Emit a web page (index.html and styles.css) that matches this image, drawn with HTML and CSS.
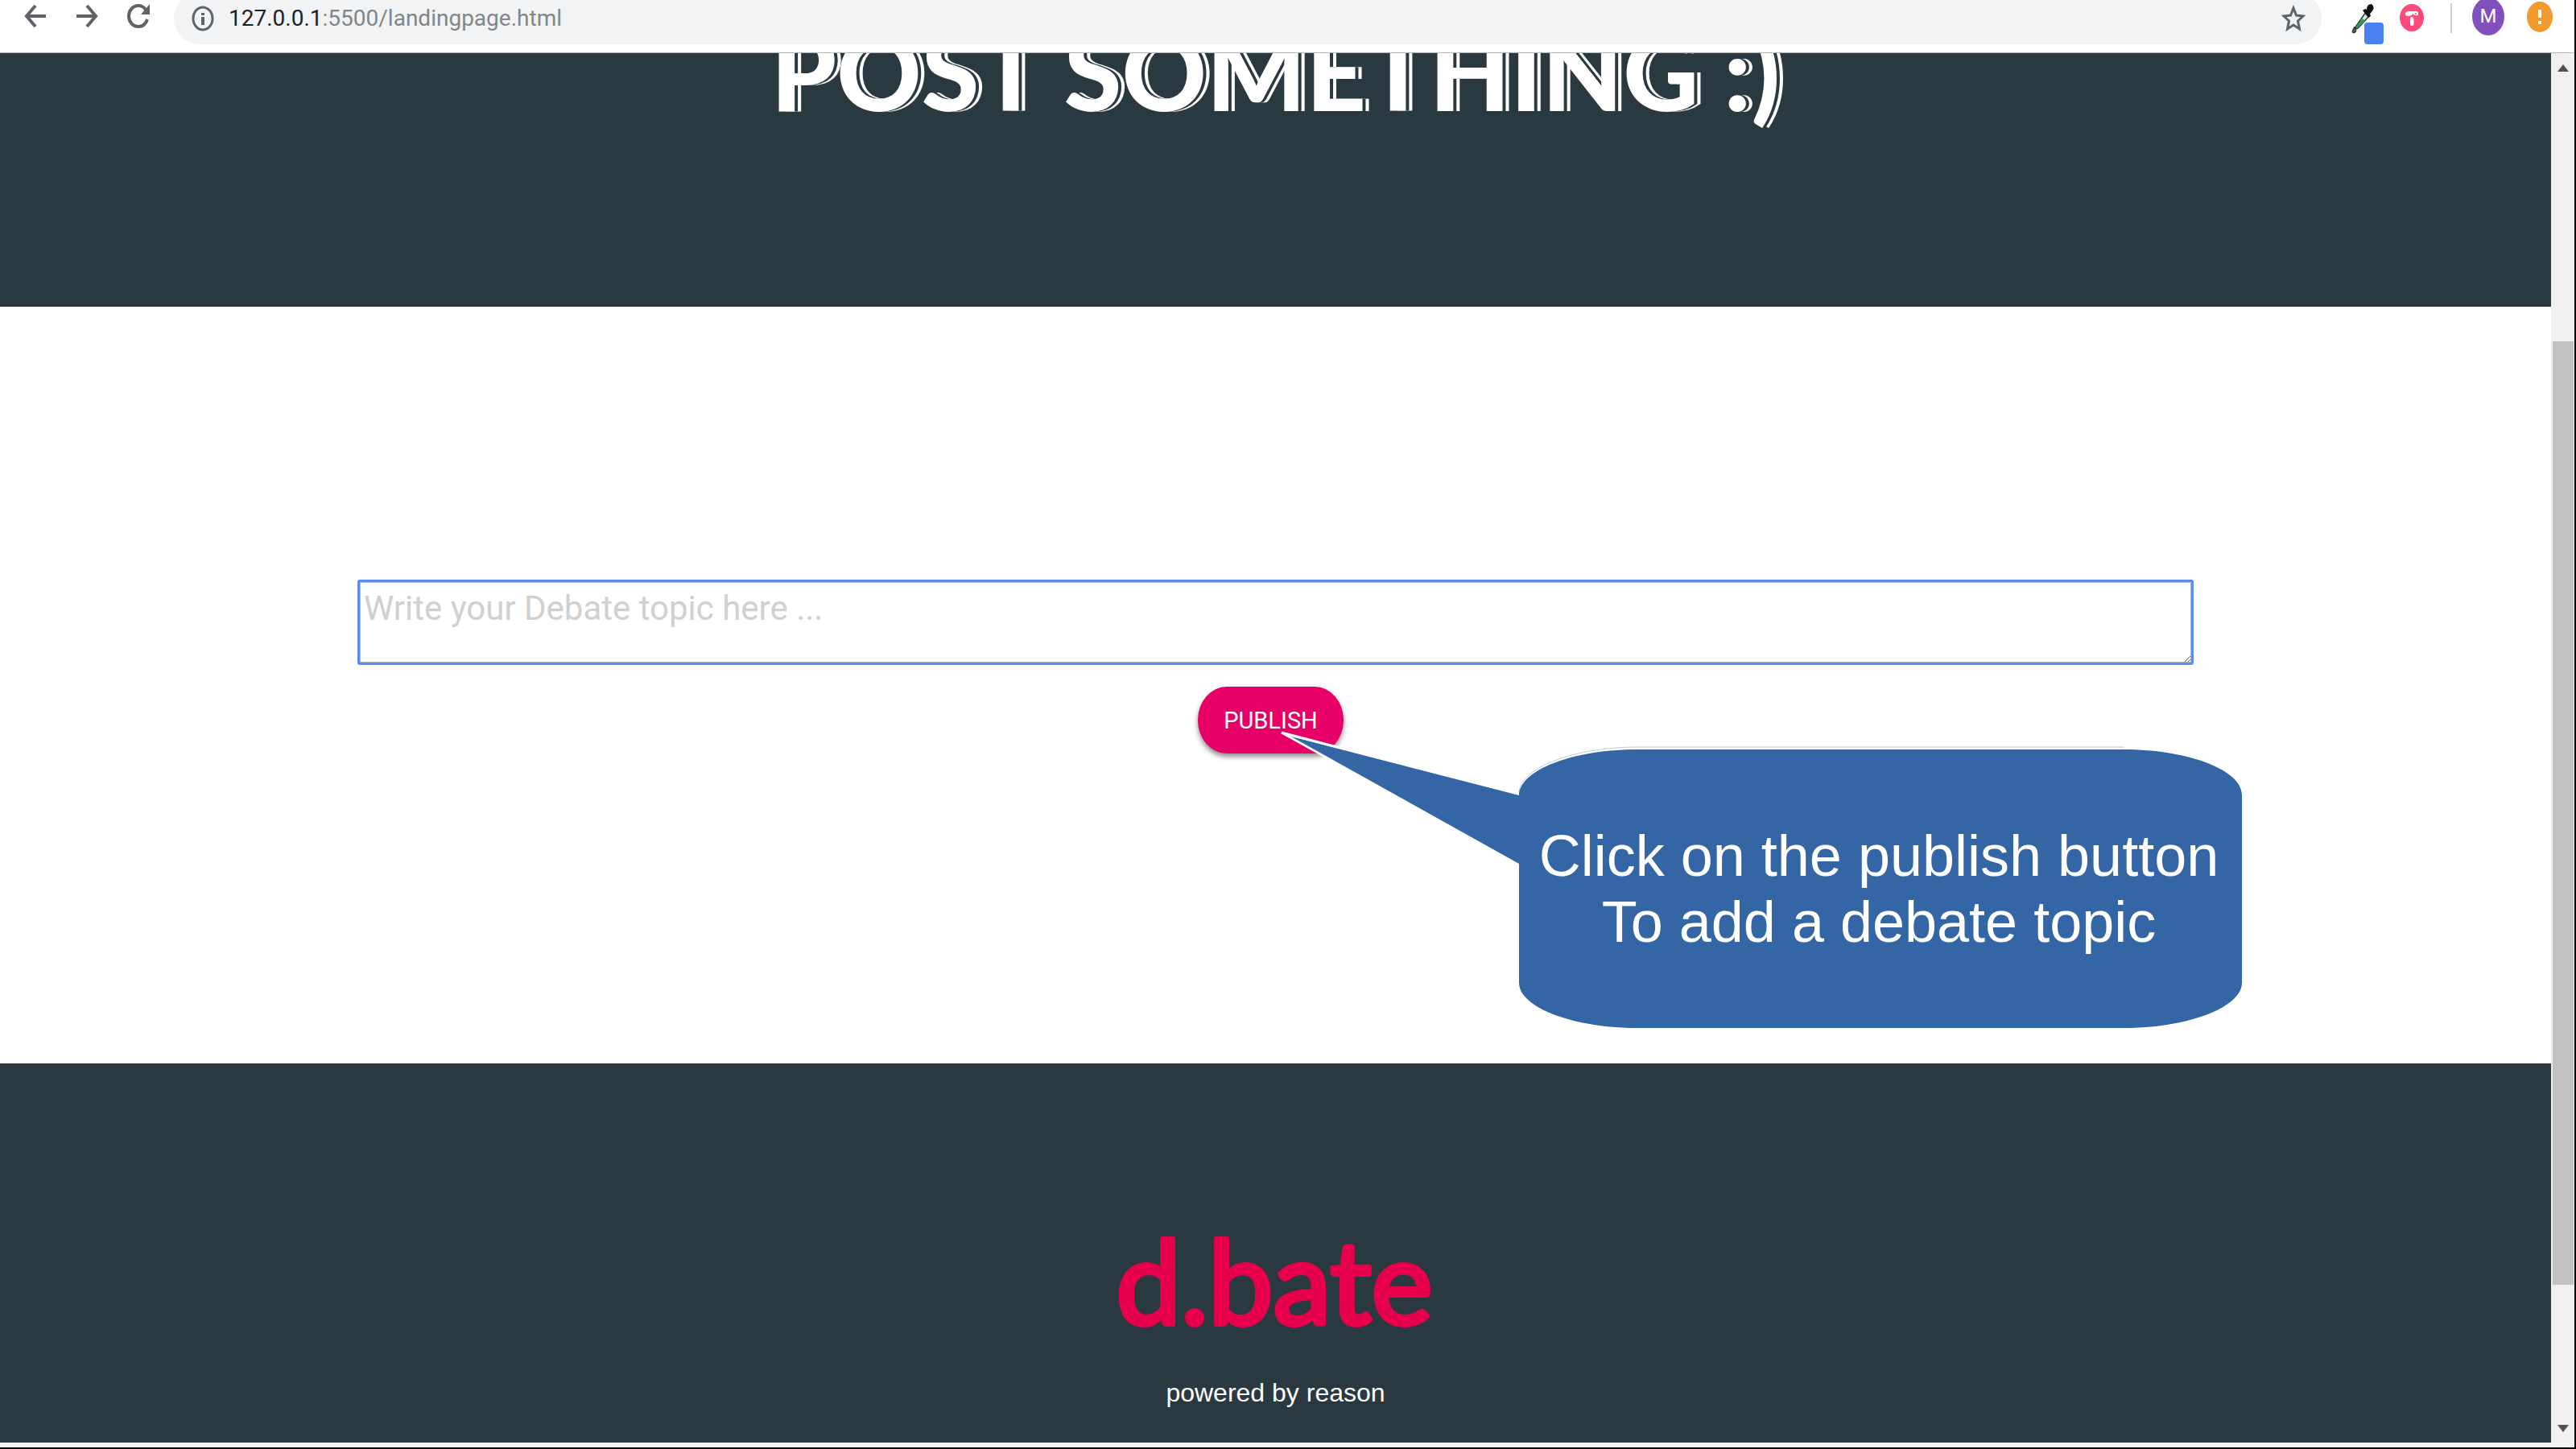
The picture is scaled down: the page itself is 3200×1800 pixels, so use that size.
FILE: index.html
```html
<!DOCTYPE html>
<html lang="en">
<head>
<meta charset="utf-8">
<title>d.bate</title>
<link rel="stylesheet" href="styles.css">
</head>
<body>
<div class="window">
  <header class="toolbar">
    <nav class="nav" aria-label="Browser navigation">
      <button class="icon-btn" aria-label="Back"><svg width="28" height="32" viewBox="0 0 28 32"><path d="M14 3 3 16 14 29M3 16H27" class="line"/></svg></button>
      <button class="icon-btn" aria-label="Forward"><svg width="28" height="32" viewBox="0 0 28 32"><path d="M14 3 25 16 14 29M25 16H1" class="line"/></svg></button>
      <button class="icon-btn" aria-label="Reload"><svg width="28" height="32" viewBox="0 0 28 32"><path d="M23 8C20 4 17 3 14 3 7 3 2 9 2 16s5 13 12 13c5 0 9-3 11-9" class="line"/><path d="M28 1V14H17z" fill="#5f6368"/></svg></button>
    </nav>
    <div class="address">
      <svg width="28" height="32" viewBox="0 0 28 32" aria-hidden="true"><ellipse cx="14" cy="16" rx="12" ry="14" class="line thin"/><path d="M14 14V24M14 9V12" class="line"/></svg>
      <span class="url"><b>127.0.0.1</b>:5500/landingpage.html</span>
      <button class="icon-btn star" aria-label="Bookmark this page"><svg width="30" height="34" viewBox="0 0 30 34"><path d="M15 4 18.500 13 27 14 20.500 20 22.500 30 15 25 7.500 30 9.500 20 3 14 11.500 13z" class="line thin"/></svg></button>
    </div>
    <div class="extensions">
      <button class="icon-btn dropper" aria-label="Color picker"><svg width="42" height="52" viewBox="0 0 42 52"><path d="M19 11 23 16 9 31 6 32 7 28z" fill="#d5e2d9" stroke="#333" stroke-width="1.500"/><path d="M15 19 18 22 9 30 7 31 8 27z" fill="#2f9a55"/><path d="M5 29q-5 8-1 8q5-1 1-8" fill="#3a6b4a" stroke="#222"/><path d="M15 9 18 7 20 8Q20 1 26 1Q31 5 26 11L24 13 25 16 22 18z" fill="#111"/><rect x="17" y="24" width="24" height="27" rx="4" fill="#4a80f0"/></svg></button>
      <button class="icon-btn fonts" aria-label="Font finder"><svg width="30" height="34" viewBox="0 0 30 34"><ellipse cx="15" cy="17" rx="15" ry="17" fill="#ff4a7c"/><path d="M7 12Q7 9 12 9H20Q23 9 23 12T20 14Q17 14 16 12 15 15 11 15 7 15 7 12zM13 19Q13 16 15 16T17.500 19V25Q17 27 15 27T13 25z" fill="#fff"/><ellipse cx="20" cy="12" rx="1" ry="1" fill="#ff4a7c"/></svg></button>
      <span class="divider"></span>
      <button class="avatar" aria-label="Profile M">M</button>
      <button class="icon-btn" aria-label="Update available"><svg width="32" height="38" viewBox="0 0 32 38"><ellipse cx="16" cy="19" rx="16" ry="19" fill="#f29a2e"/><path d="M16 10V20M16 24V28" stroke="#fff" stroke-width="4"/></svg></button>
    </div>
  </header>
  <div class="viewport">
    <div class="page">
      <section class="hero"><h1>POST SOMETHING :)</h1></section>
      <main class="compose">
        <form class="form">
          <textarea class="topic" aria-label="Debate topic" placeholder="Write your Debate topic here ..."></textarea>
          <button class="publish" type="button">PUBLISH</button>
        </form>
        <aside class="callout">
          <svg class="callout-shape" width="1198" height="374" viewBox="0 0 1198 374" aria-hidden="true">
            <path d="M4 3 299 80C299 50 365 24 446 24H1050C1131 24 1197 50 1197 80V314C1197 344 1131 370 1050 370H446C365 370 299 344 299 314V166z" fill="#fff" stroke="#fff" stroke-width="3"/>
            <path d="M446 21H1050M299 78C299 48 365 21 446 21" fill="none" stroke="#b9cbe3"/>
            <path d="M16 8 299 81C299 50 365 24 446 24H1050C1131 24 1197 50 1197 80V314C1197 344 1131 370 1050 370H446C365 370 299 344 299 314V166z" fill="#3465a4"/>
          </svg>
          <p class="callout-text">Click on the publish button<br>To add a debate topic</p>
        </aside>
      </main>
      <footer class="footer">
        <svg class="logo" width="420" height="200" viewBox="0 0 420 200" role="img" aria-label="d.bate"><text x="208" y="155" text-anchor="middle">d.bate</text></svg>
        <p class="tagline">powered by reason</p>
      </footer>
    </div>
    <div class="scrollbar" aria-hidden="true">
      <svg width="14" height="9" viewBox="0 0 14 9"><path d="M7 0 14 9H0z" fill="#505050"/></svg>
      <div class="track"><div class="thumb"></div></div>
      <svg width="14" height="9" viewBox="0 0 14 9"><path d="M7 9 14 0H0z" fill="#505050"/></svg>
    </div>
  </div>
</div>
</body>
</html>
```
FILE: styles.css
```css
* { box-sizing: border-box; }
body { margin: 0; background: #000; font-family: "Liberation Sans", Arial, sans-serif; }
button { border: 0; padding: 0; margin: 0; background: none; cursor: pointer; }
svg { display: block; flex: none; }

.window {
  display: flex;
  flex-direction: column;
  height: 100vh;
  border-right: 2px solid #000;
  border-bottom: 2px solid #000;
  background: #fff;
  overflow: hidden;
}

.toolbar {
  display: flex;
  align-items: flex-start;
  height: 66px;
  flex: none;
  border-bottom: 1px solid #b4b6b8;
}
.line { fill: none; stroke: #5f6368; stroke-width: 4; }
.thin { stroke-width: 3; }
.nav { display: flex; gap: 36px; padding: 4px 30px; }
.address {
  flex: 1;
  display: flex;
  align-items: center;
  gap: 18px;
  height: 64px;
  margin-top: -9px;
  padding: 0 20px 0 22px;
  border-radius: 32px;
  background: #f1f3f4;
}
.url {
  flex: 1;
  font: 28px/32px Roboto, sans-serif;
  color: #80868b;
}
.url b { font-weight: 400; color: #202124; }
.extensions { display: flex; padding: 0 27px 0 36px; }
.extensions .icon-btn { align-self: flex-start; padding-top: 2px; }
.extensions .dropper { padding-top: 4px; }
.extensions .fonts { margin-left: 19px; padding-top: 5px; }
.divider { width: 2px; height: 37px; margin: 4px 25px 0 33px; background: #d0d2d4; }
.avatar {
  width: 40px;
  height: 47px;
  margin: -3px 28px 0 0;
  border-radius: 50%;
  background: #8250bc;
  color: #fff;
  font: 24px/47px Roboto, sans-serif;
}

.viewport { flex: 1; display: flex; min-height: 0; border-bottom: 6px solid #f4f4f4; }
.page { flex: 1; display: flex; flex-direction: column; min-width: 0; overflow: hidden; }

.hero {
  flex: none;
  height: 315px;
  background: #2a383f;
  overflow: hidden;
}
.hero h1 {
  margin: -58px 0 0;
  text-align: center;
  color: #fff;
  font: 900 130px/160px Lato, sans-serif;
  text-shadow: 4px 0 #2a383f, 8px 0 #fff;
}

.compose { position: relative; flex: none; height: 940px; background: #fff; }
.form {
  display: flex;
  flex-direction: column;
  align-items: center;
  gap: 27px;
  padding: 339px 444px 0;
}
.topic {
  width: 100%;
  height: 106px;
  padding: 5px;
  border: 3px solid #5b8def;
  border-radius: 3px;
  outline: 0;
  box-shadow: inset 0 0 0 1px #b8b8b8;
  font: 42px/56px Roboto, sans-serif;
  color: #222;
}
.topic::placeholder { color: #d0d0d0; opacity: 1; }
.publish {
  width: 181px;
  height: 83px;
  margin-right: 12px;
  border-radius: 36px / 42px;
  background: #e60067;
  box-shadow: 0 4px 6px rgba(0, 0, 0, 0.45);
  color: #fff;
  font: 29px/36px Roboto, sans-serif;
}

.callout { position: absolute; left: 1588px; top: 526px; width: 1198px; }
.callout-text {
  position: absolute;
  left: 294px;
  right: 0;
  top: 115px;
  margin: 0;
  text-align: center;
  white-space: nowrap;
  color: #fff;
  font-size: 72px;
  line-height: 82px;
}

.footer {
  flex: 1;
  display: flex;
  flex-direction: column;
  align-items: center;
  padding-top: 169px;
  background: #2a383f;
}
.logo text {
  font: 400 144px Lato, sans-serif;
  fill: #e6004c;
  stroke: #e6004c;
  stroke-width: 6;
  stroke-linejoin: round;
}
.tagline { margin: 20px 0 0; color: #fff; font-size: 32px; line-height: 40px; }

.scrollbar {
  flex: none;
  width: 29px;
  display: flex;
  flex-direction: column;
  align-items: center;
  gap: 12px;
  padding: 14px 0 13px;
  background: #f0f0f0;
}
.track { flex: 1; width: 26px; }
.thumb { height: 1172px; margin-top: 323px; background: #c1c1c1; }
```
